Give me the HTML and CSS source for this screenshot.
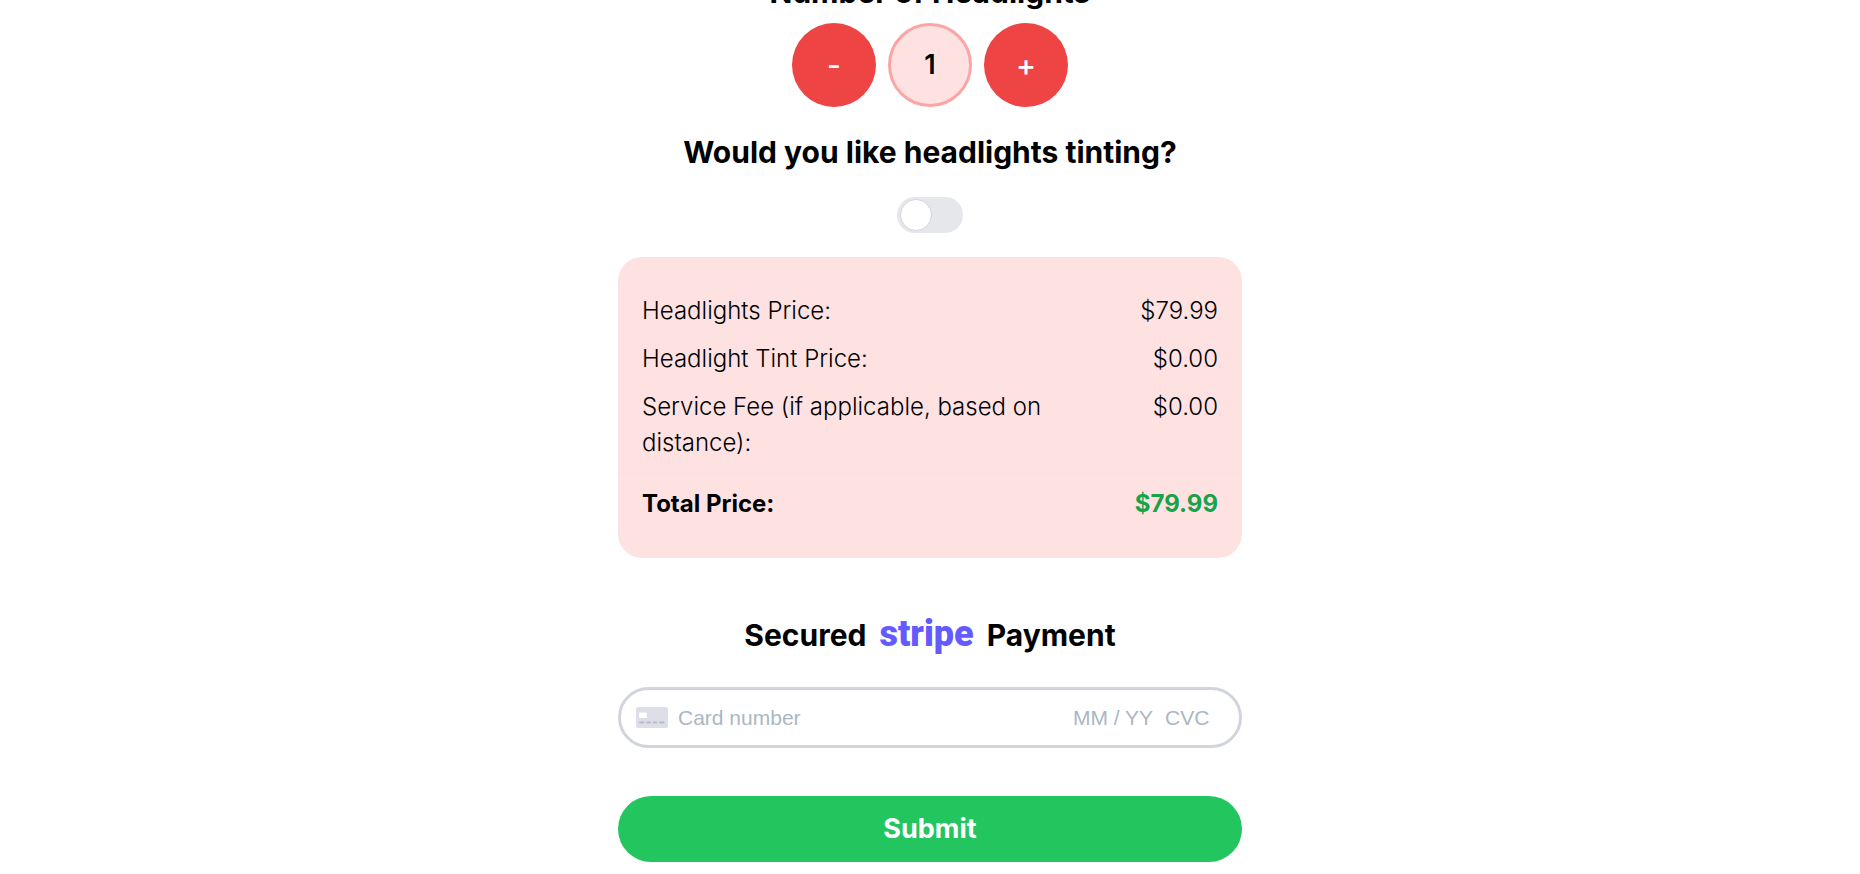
FILE: index.html
```html
<!DOCTYPE html>
<html lang="en">
<head>
<meta charset="utf-8">
<meta name="viewport" content="width=device-width, initial-scale=1">
<title>Headlight Restoration</title>
<link rel="stylesheet" href="styles.css">
</head>
<body>
<main class="page">
  <form class="order">
    <h2 class="heading">Number of Headlights</h2>
    <div class="counter">
      <button class="counter-button" type="button" aria-label="Fewer headlights">-</button>
      <output class="counter-value" aria-label="Number of headlights">1</output>
      <button class="counter-button" type="button" aria-label="More headlights">+</button>
    </div>
    <label class="heading heading-tint" for="tint">Would you like headlights tinting?</label>
    <input class="toggle" id="tint" type="checkbox" role="switch">
    <dl class="prices">
      <div class="price-row"><dt>Headlights Price:</dt><dd>$79.99</dd></div>
      <div class="price-row"><dt>Headlight Tint Price:</dt><dd>$0.00</dd></div>
      <div class="price-row"><dt>Service Fee (if applicable, based on distance):</dt><dd>$0.00</dd></div>
      <div class="price-row price-total"><dt>Total Price:</dt><dd class="amount">$79.99</dd></div>
    </dl>
    <h2 class="heading payment-heading">
      <span>Secured</span>
      <span class="stripe">stripe</span>
      <span>Payment</span>
    </h2>
    <div class="card-field">
      <svg class="card-icon" viewBox="0 0 32 21" aria-hidden="true">
        <rect width="32" height="21" rx="2" fill="#dcdfe8"/>
        <rect x="3" y="5.500" width="8" height="5.500" rx="1" fill="#fff"/>
        <path d="M4 15.500h3.500M11 15.500h3M17.500 15.500h3M24 15.500h3.500" stroke="#b8bccd" stroke-width="2" stroke-linecap="round"/>
      </svg>
      <input class="card-input card-number" type="text" placeholder="Card number" aria-label="Card number">
      <input class="card-input card-expiry" type="text" placeholder="MM / YY" aria-label="Expiry date">
      <input class="card-input card-cvc" type="text" placeholder="CVC" aria-label="Security code">
    </div>
    <button class="submit" type="submit">Submit</button>
  </form>
</main>
</body>
</html>
```
FILE: styles.css
```css
* {
  box-sizing: border-box;
}

body {
  margin: 0;
  background: #fff;
  color: #000;
  font-family: Inter, sans-serif;
  font-size: 24px;
  font-weight: 300;
  line-height: 36px;
  overflow: hidden;
}

button,
input {
  font: inherit;
}

.page {
  padding: 0 24px 12px;
  margin-top: -30px;
}

.order {
  display: flex;
  flex-direction: column;
  align-items: center;
  max-width: 624px;
  margin: 0 auto;
}

.heading {
  margin: 0;
  font-size: 30px;
  font-weight: 700;
  line-height: 45px;
  text-align: center;
}

.counter {
  display: flex;
  gap: 12px;
  margin-top: 8px;
}

.counter-button,
.counter-value {
  display: flex;
  align-items: center;
  justify-content: center;
  width: 84px;
  height: 84px;
  padding: 0;
  border: 0;
  border-radius: 50%;
  font-size: 27px;
  font-weight: 600;
}

.counter-button {
  background: #ef4444;
  color: #fff;
  font-size: 30px;
  font-weight: 500;
}

.counter-value {
  border: 3px solid #fca5a5;
  background: #fee2e2;
}

.heading-tint {
  margin: 23px 0 22px;
}

.toggle {
  display: flex;
  align-items: center;
  appearance: none;
  width: 66px;
  height: 36px;
  margin: 0 0 24px;
  padding: 3px;
  border-radius: 18px;
  background: #e5e7eb;
}

.toggle::before {
  content: "";
  width: 30px;
  height: 30px;
  border: 1px solid #d1d5db;
  border-radius: 50%;
  background: #fff;
}

.toggle:checked {
  justify-content: flex-end;
  background: #22c55e;
}

.prices {
  width: 100%;
  margin: 0;
  padding: 24px 0;
  border-radius: 24px;
  background: #fee2e2;
}

.price-row {
  display: flex;
  justify-content: space-between;
  gap: 60px;
  padding: 12px 24px 0;
}

.price-row dd {
  margin: 0;
}

.price-total {
  margin-top: 12px;
  padding-bottom: 12px;
  border-top: 1px solid #e5e7eb;
  font-weight: 700;
}

.amount {
  color: #16a34a;
}

.payment-heading {
  display: flex;
  justify-content: center;
  gap: 13px;
  margin: 55px 0 29px;
}

.stripe {
  color: #635bff;
  font-family: Roboto, sans-serif;
  font-size: 36px;
  font-weight: 900;
  line-height: 42px;
}

.card-field {
  display: flex;
  align-items: center;
  width: 100%;
  height: 61px;
  padding: 0 26px 0 15px;
  border: 3px solid #d1d5db;
  border-radius: 31px;
}

.card-icon {
  flex: none;
  width: 32px;
  height: 21px;
  margin-right: 10px;
}

.card-input {
  min-width: 0;
  padding: 0;
  border: 0;
  outline: 0;
  background: none;
  font-family: "Liberation Sans", sans-serif;
  font-size: 21px;
  font-weight: 400;
}

.card-input::placeholder {
  color: #aab7c4;
  opacity: 1;
}

.card-number {
  flex: 1;
}

.card-expiry {
  width: 92px;
}

.card-cvc {
  width: 48px;
}

.submit {
  width: 100%;
  height: 66px;
  margin-top: 48px;
  border: 0;
  border-radius: 33px;
  background: #22c55e;
  color: #fff;
  font-size: 27px;
  font-weight: 700;
}
```
